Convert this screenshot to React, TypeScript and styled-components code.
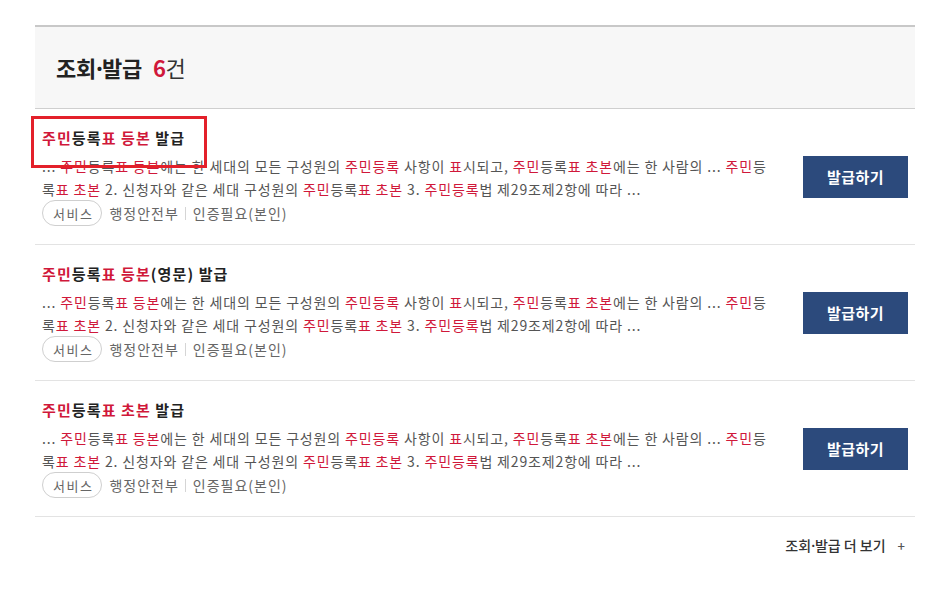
import React from "react";
import styled, { createGlobalStyle } from "styled-components";

const Global = createGlobalStyle`
  html, body { margin: 0; padding: 0; background: #fff; }
  body {
    font-family: "Noto Sans CJK KR", "Noto Sans", "Liberation Sans", sans-serif;
    color: #222;
  }
`;

const Page = styled.div`
  width: 880px;
  padding: 25px 0 0 35px;
`;

const Header = styled.div`
  height: 81px;
  background: #f7f7f7;
  border-top: 2px solid #c8c8c8;
  border-bottom: 1px solid #cfcfcf;
  display: flex;
  align-items: center;
  padding-left: 21px;
  box-sizing: content-box;
`;

const HeaderTitle = styled.h2`
  margin: 0 0 2px;
  font-size: 22px;
  font-weight: 700;
  color: #222;
  letter-spacing: -0.3px;
`;

const Dot = styled.span`
  margin: 0 -0.17em 0 -0.13em;
`;

const Count = styled.span`
  color: #d0183a;
  margin-left: 11px;
`;

const CountUnit = styled.span`
  font-weight: 400;
  color: #333;
`;

const List = styled.ul`
  list-style: none;
  margin: 0;
  padding: 0;
`;

const Item = styled.li`
  position: relative;
  display: flex;
  align-items: center;
  gap: 20px;
  padding: 18px 7px 18px 7px;
  border-bottom: 1px solid #e3e3e3;
`;

const Body = styled.div`
  flex: 1;
  min-width: 0;
`;

const Title = styled.div`
  font-size: 15px;
  font-weight: 700;
  line-height: 22px;
  color: #222;
  letter-spacing: 1.1px;
`;

const Hl = styled.span`
  color: #d0183a;
`;

const Desc = styled.p`
  margin: 6px 0 0;
  font-size: 14px;
  line-height: 23px;
  color: #555;
  letter-spacing: 0.85px;
  width: 735px;
`;

const Meta = styled.div`
  display: flex;
  align-items: center;
  margin-top: -1px;
  font-size: 14px;
  color: #666;
  letter-spacing: 1px;
`;

const Tag = styled.span`
  display: inline-flex;
  align-items: center;
  justify-content: center;
  height: 24px;
  padding: 0 8px 0 10px;
  border: 1px solid #cfcfcf;
  border-radius: 13px;
  font-size: 13px;
  color: #666;
  letter-spacing: 1.5px;
  margin-right: 7px;
`;

const Sep = styled.span`
  display: inline-block;
  width: 1px;
  height: 13px;
  background: #d5d5d5;
  margin: 0 7px 0 6px;
`;

const IssueButton = styled.button`
  width: 105px;
  height: 42px;
  border: 0;
  background: #2c4a7c;
  color: #fff;
  font-family: inherit;
  font-size: 15px;
  font-weight: 700;
  letter-spacing: 0.5px;
  cursor: pointer;
  flex: none;
`;

const Annotation = styled.div`
  position: absolute;
  left: -4px;
  top: 7px;
  width: 170px;
  height: 46px;
  border: 3px solid #e3202a;
  pointer-events: none;
`;

const MoreRow = styled.div`
  display: flex;
  justify-content: flex-end;
  padding: 18px 10px 0 0;
`;

const More = styled.a`
  font-size: 14px;
  font-weight: 500;
  color: #333;
  letter-spacing: 0px;
`;

const Plus = styled.span`
  font-size: 13px;
  color: #555;
  margin-left: 12px;
`;

const DescText = () => (
  <Desc>
    ... <Hl>주민</Hl>등록<Hl>표 등본</Hl>에는 한 세대의 모든 구성원의 <Hl>주민등록</Hl> 사항이{" "}
    <Hl>표</Hl>시되고, <Hl>주민</Hl>등록<Hl>표 초본</Hl>에는 한 사람의 ... <Hl>주민</Hl>등록
    <Hl>표 초본</Hl> 2. 신청자와 같은 세대 구성원의 <Hl>주민</Hl>등록<Hl>표 초본</Hl> 3.{" "}
    <Hl>주민등록</Hl>법 제29조제2항에 따라 ...
  </Desc>
);

const items: { title: React.ReactNode; marked?: boolean }[] = [
  {
    title: (
      <>
        <Hl>주민</Hl>등록<Hl>표 등본</Hl> 발급
      </>
    ),
    marked: true,
  },
  {
    title: (
      <>
        <Hl>주민</Hl>등록<Hl>표 등본</Hl>(영문) 발급
      </>
    ),
  },
  {
    title: (
      <>
        <Hl>주민</Hl>등록<Hl>표 초본</Hl> 발급
      </>
    ),
  },
];

export default function App() {
  return (
    <>
      <Global />
      <Page>
        <Header>
          <HeaderTitle>
            조회<Dot>·</Dot>발급<Count>6</Count>
            <CountUnit>건</CountUnit>
          </HeaderTitle>
        </Header>
        <List>
          {items.map((it, i) => (
            <Item key={i}>
              {it.marked && <Annotation />}
              <Body>
                <Title>{it.title}</Title>
                <DescText />
                <Meta>
                  <Tag>서비스</Tag>
                  행정안전부
                  <Sep />
                  인증필요(본인)
                </Meta>
              </Body>
              <IssueButton>발급하기</IssueButton>
            </Item>
          ))}
        </List>
        <MoreRow>
          <More>
            조회<Dot>·</Dot>발급 더 보기<Plus>+</Plus>
          </More>
        </MoreRow>
      </Page>
    </>
  );
}
